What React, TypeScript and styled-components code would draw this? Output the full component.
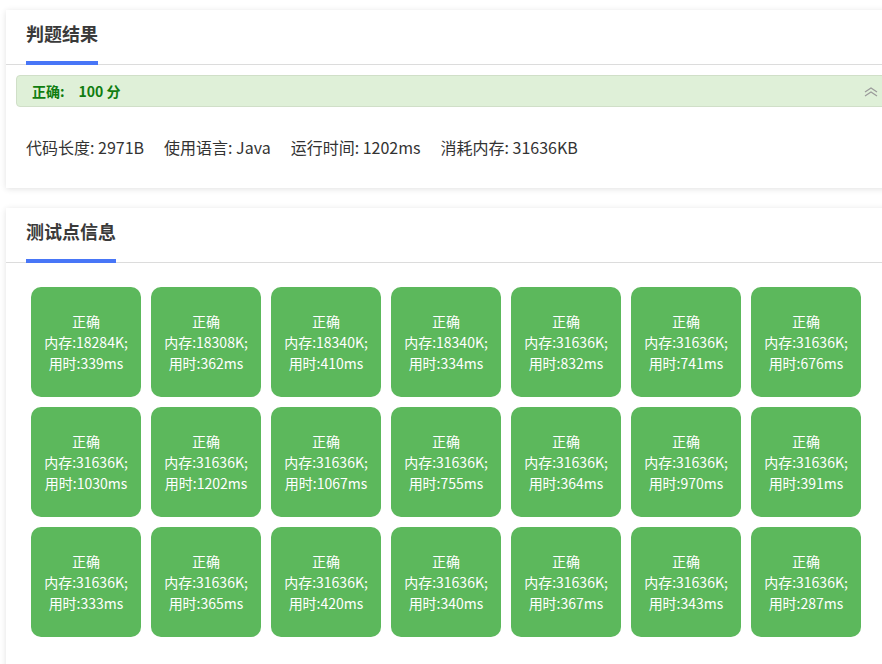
import styled, { createGlobalStyle } from 'styled-components';

const GlobalStyle = createGlobalStyle`
  body {
    margin: 0;
    background: #ffffff;
    overflow: hidden;
    font-family: "Segoe UI", "Noto Sans CJK SC", "Noto Sans", sans-serif;
  }
`;

const cases = [
  ['18284K', '339ms'], ['18308K', '362ms'], ['18340K', '410ms'], ['18340K', '334ms'],
  ['31636K', '832ms'], ['31636K', '741ms'], ['31636K', '676ms'],
  ['31636K', '1030ms'], ['31636K', '1202ms'], ['31636K', '1067ms'], ['31636K', '755ms'],
  ['31636K', '364ms'], ['31636K', '970ms'], ['31636K', '391ms'],
  ['31636K', '333ms'], ['31636K', '365ms'], ['31636K', '420ms'], ['31636K', '340ms'],
  ['31636K', '367ms'], ['31636K', '343ms'], ['31636K', '287ms'],
];

function Collapse() {
  return (
    <svg width="16" height="12" viewBox="0 0 16 12" fill="none" stroke="#9a9a9a" strokeWidth="1.2">
      <path d="M2 6 L8 2 L14 6" />
      <path d="M2 10 L8 6 L14 10" />
    </svg>
  );
}

function App() {
  return (
    <Page>
      <GlobalStyle />
      <Card>
        <CardHead>
          <Tab>判题结果</Tab>
        </CardHead>
        <Alert>
          <AlertText>
            正确:<Score>100 分</Score>
          </AlertText>
          <Collapse />
        </Alert>
        <Stats>
          <span>代码长度: 2971B</span>
          <span>使用语言: Java</span>
          <span>运行时间: 1202ms</span>
          <span>消耗内存: 31636KB</span>
        </Stats>
      </Card>
      <Card $last>
        <CardHead>
          <Tab>测试点信息</Tab>
        </CardHead>
        <Grid>
          {cases.map(([mem, time], i) => (
            <Tile key={i}>
              <span>正确</span>
              <span>内存:{mem};</span>
              <span>用时:{time}</span>
            </Tile>
          ))}
        </Grid>
      </Card>
    </Page>
  );
}

const Page = styled.div`
  width: 882px;
  height: 664px;
  overflow: hidden;
  padding: 10px 0 0 6px;
  box-sizing: border-box;
  display: flex;
  flex-direction: column;
  gap: 20px;
`;

const Card = styled.section<{ $last?: boolean }>`
  width: 900px;
  flex-shrink: 0;
  background: #fff;
  box-shadow: 0 1px 6px rgba(0, 0, 0, 0.12);
  padding-bottom: ${({ $last }) => ($last ? '40px' : '0')};
`;

const CardHead = styled.div`
  height: 54px;
  border-bottom: 1px solid #dcdcdc;
  padding-left: 20px;
  display: flex;
  align-items: flex-end;
`;

const Tab = styled.div`
  font-size: 18px;
  font-weight: 700;
  color: #3a3a3a;
  line-height: 24px;
  padding: 0 0 16px;
  border-bottom: 4px solid #4876f7;
  margin-bottom: -1px;
`;

const Alert = styled.div`
  margin: 10px 0 0 10px;
  height: 30px;
  background: #dff0d8;
  border: 1px solid #d0dfc8;
  border-radius: 4px;
  display: flex;
  align-items: center;
  justify-content: space-between;
  padding: 0 26px 0 15px;
  svg {
    margin-top: 2px;
  }
`;

const AlertText = styled.span`
  font-size: 14px;
  font-weight: 700;
  color: #107d10;
`;

const Score = styled.span`
  margin-left: 14px;
`;

const Stats = styled.div`
  display: flex;
  gap: 20px;
  padding: 28px 20px 29px;
  font-size: 16px;
  line-height: 24px;
  color: #333;
`;

const Grid = styled.div`
  display: grid;
  grid-template-columns: repeat(7, 110px);
  gap: 10px;
  padding: 24px 0 0 25px;
`;

const Tile = styled.div`
  height: 110px;
  border-radius: 10px;
  background: #5cb85c;
  color: #fff;
  font-size: 14px;
  line-height: 21px;
  display: flex;
  flex-direction: column;
  align-items: center;
  justify-content: center;
  box-sizing: border-box;
`;

export default App;
